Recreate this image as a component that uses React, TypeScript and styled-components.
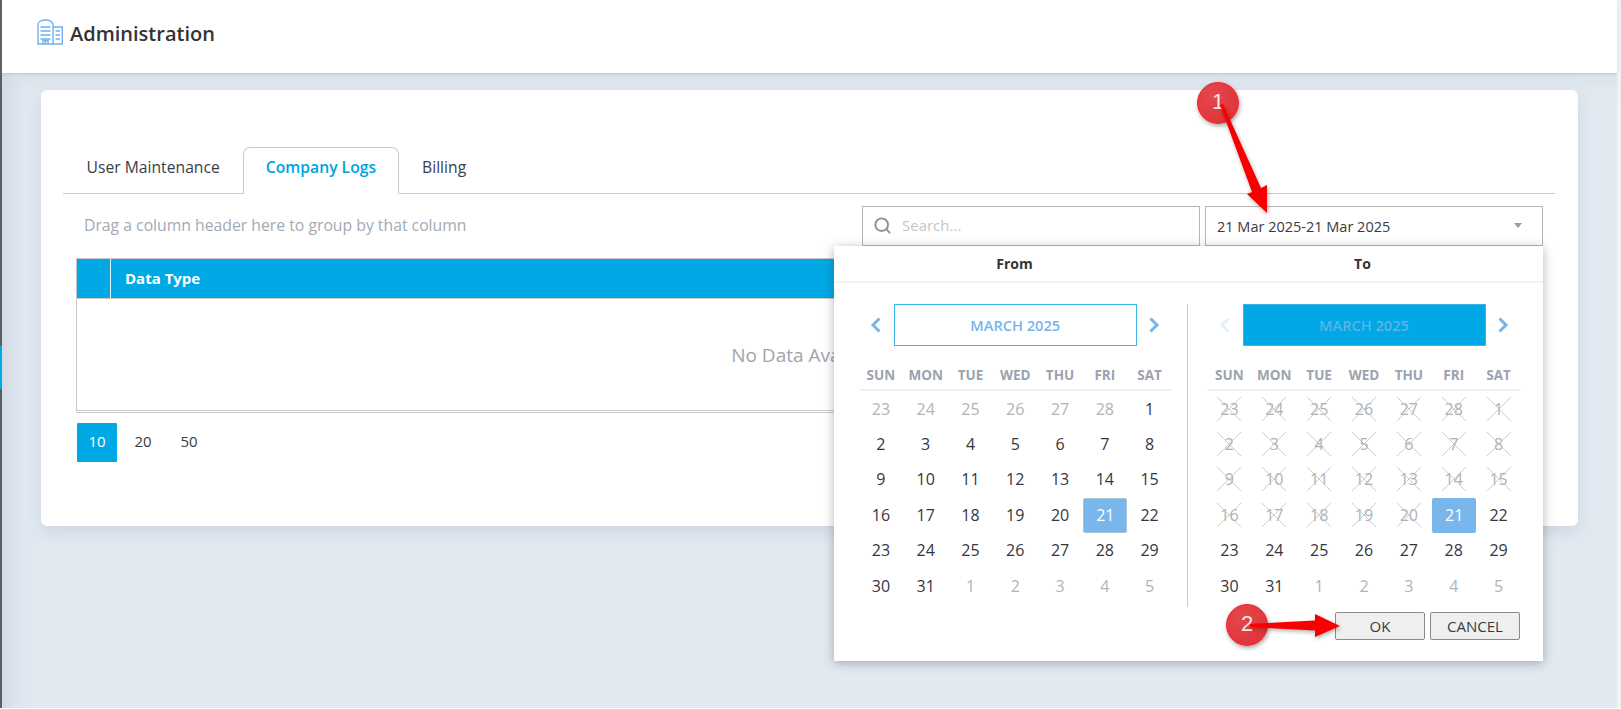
import styled, { createGlobalStyle } from "styled-components";
import { Search } from "lucide-react";

const GlobalStyle = createGlobalStyle`
    html, body {
        margin: 0;
        padding: 0;
        background: #fff;
        overflow: hidden;
    }
    body {
        font-family: "Open Sans", "Noto Sans", sans-serif;
        color: #333;
    }
`;

type Day = { label: number; muted?: boolean; crossed?: boolean; selected?: boolean };

const range = (from: number, to: number) =>
    Array.from({ length: to - from + 1 }, (_, i) => from + i);

const WEEK = ["SUN", "MON", "TUE", "WED", "THU", "FRI", "SAT"];

const buildDays = (crossBefore: boolean): Day[] => [
    ...range(23, 28).map((label) => ({ label, muted: !crossBefore, crossed: crossBefore })),
    ...range(1, 31).map((label) => ({
        label,
        crossed: crossBefore && label < 21,
        selected: label === 21,
    })),
    ...range(1, 5).map((label) => ({ label, muted: true })),
];

function BuildingIcon() {
    return (
        <svg width="26" height="26" viewBox="0 0 26 26" fill="none" stroke="#6fb1ee" strokeWidth="1.4">
            <path d="M1 25V5.500C1 3 4 1 8.500 1S16 3 16 5.500V25Z" />
            <path d="M16 8H25.300V25H16" />
            <path d="M3.500 8H13.500M3.500 12H13.500M3.500 16H13.500M3.500 20H13.500" />
            <path d="M18.500 12H23M18.500 16H23M18.500 20H23" />
            <path d="M6 25V21.500H11V25M8.500 21.500V25" />
        </svg>
    );
}

function Chevron({ dir, faded }: { dir: "left" | "right"; faded?: boolean }) {
    return (
        <svg width="12" height="16" viewBox="0 0 12 16" fill="none">
            <path
                d={dir === "left" ? "M9.500 1.500L3 8L9.500 14.500" : "M2.500 1.500L9 8L2.500 14.500"}
                stroke={faded ? "#e6f0fa" : "#78b4ea"}
                strokeWidth="3"
            />
        </svg>
    );
}

function Calendar({ side }: { side: "from" | "to" }) {
    const isTo = side === "to";
    return (
        <CalendarPanel $side={side}>
            <MonthNav>
                <ArrowSlot>
                    <Chevron dir="left" faded={isTo} />
                </ArrowSlot>
                <MonthBox $filled={isTo}>MARCH 2025</MonthBox>
                <ArrowSlot>
                    <Chevron dir="right" />
                </ArrowSlot>
            </MonthNav>
            <WeekRow>
                {WEEK.map((day) => (
                    <span key={day}>{day}</span>
                ))}
            </WeekRow>
            <DayGrid>
                {buildDays(isTo).map((day, i) => (
                    <DayCell
                        key={i}
                        $muted={day.muted}
                        $crossed={day.crossed}
                        $selected={day.selected}
                        $outlined={day.selected && !isTo}
                    >
                        {day.label}
                    </DayCell>
                ))}
            </DayGrid>
        </CalendarPanel>
    );
}

function App() {
    return (
        <Page>
            <GlobalStyle />
            <LeftRail>
                <RailMark />
            </LeftRail>
            <Main>
                <Header>
                    <BuildingIcon />
                    <Title>Administration</Title>
                </Header>
                <Content>
                    <Card>
                        <Tabs>
                            <Tab>User Maintenance</Tab>
                            <Tab $active>Company Logs</Tab>
                            <Tab>Billing</Tab>
                        </Tabs>
                        <Toolbar>
                            <GroupHint>Drag a column header here to group by that column</GroupHint>
                            <SearchBox>
                                <Search size={19} color="#8a9097" strokeWidth={2.4} />
                                <SearchInput placeholder="Search..." readOnly />
                            </SearchBox>
                            <DateSelect>
                                21 Mar 2025-21 Mar 2025
                                <Caret />
                            </DateSelect>
                        </Toolbar>
                        <Table>
                            <TableHead>
                                <ExpandCol />
                                <HeadCol>Data Type</HeadCol>
                            </TableHead>
                            <TableBody>No Data Available</TableBody>
                        </Table>
                        <Pager>
                            <PageSize $active>10</PageSize>
                            <PageSize>20</PageSize>
                            <PageSize>50</PageSize>
                        </Pager>
                        <Popup>
                            <PopupHead>
                                <PopupHeadCell $side="from">From</PopupHeadCell>
                                <PopupHeadCell $side="to">To</PopupHeadCell>
                            </PopupHead>
                            <Calendars>
                                <Calendar side="from" />
                                <Calendar side="to" />
                            </Calendars>
                            <PopupFooter>
                                <FooterButton>OK</FooterButton>
                                <FooterButton>CANCEL</FooterButton>
                            </PopupFooter>
                        </Popup>
                    </Card>
                </Content>
            </Main>
            <RightEdge />
            <StepBadge $x={1218} $y={103}>1</StepBadge>
            <StepBadge $x={1247} $y={625}>2</StepBadge>
            <Annotations width="1621" height="709" viewBox="0 0 1621 709">
                <path d="M1220 105L1223 104L1261 188L1267 185L1267 213L1247 194L1252 192Z" fill="#f80000" />
                <path d="M1250 624L1315 620.500L1315 614L1340 626L1315 637L1315 630.500L1250 627Z" fill="#f80000" />
            </Annotations>
        </Page>
    );
}

const Page = styled.div`
    position: relative;
    display: flex;
    width: 1621px;
    height: 708px;
    overflow: hidden;
`;

const LeftRail = styled.div`
    width: 2px;
    flex: none;
    background: #5e5e5e;
    padding-top: 346px;
`;

const RailMark = styled.div`
    height: 43px;
    background: #00a8e6;
`;

const RightEdge = styled.div`
    width: 4px;
    flex: none;
    background: #f1f1f1;
`;

const Main = styled.div`
    flex: 1;
    min-width: 0;
    display: flex;
    flex-direction: column;
    background: #e2e9f1;
`;

const Header = styled.header`
    height: 73px;
    flex: none;
    display: flex;
    align-items: center;
    gap: 7px;
    padding: 0 0 9px 35px;
    box-sizing: border-box;
    background: #fff;
    position: relative;
    box-shadow: 0 1px 2px rgba(120, 135, 150, 0.3);
`;

const Title = styled.h1`
    margin: 0;
    padding-top: 2px;
    font-size: 20px;
    font-weight: 600;
    color: #333;
`;

const Content = styled.main`
    flex: 1;
    padding: 17px 39px 0;
    box-shadow: inset 22px 14px 22px -14px rgba(170, 185, 200, 0.35);
`;

const Card = styled.section`
    position: relative;
    background: #fff;
    border-radius: 6px;
    padding: 57px 0 64px;
    box-shadow: 0 6px 16px rgba(170, 185, 200, 0.4);
`;

const Tabs = styled.nav`
    display: flex;
    height: 46px;
    margin: 0 23px 0 22px;
    padding-left: 0.5px;
    border-bottom: 1px solid #c9c9c9;
`;

const Tab = styled.div<{ $active?: boolean }>`
    padding: 0 22px 8px;
    height: 47px;
    box-sizing: border-box;
    display: flex;
    align-items: center;
    font-size: 15.7px;
    font-weight: ${(p) => (p.$active ? 600 : 400)};
    color: ${(p) => (p.$active ? "#00a3e3" : "#3c3c46")};
    border: 1px solid ${(p) => (p.$active ? "#c9c9c9" : "transparent")};
    border-bottom: 1px solid ${(p) => (p.$active ? "#fff" : "transparent")};
    border-radius: 7px 7px 0 0;
    background: ${(p) => (p.$active ? "#fff" : "transparent")};
`;

const Toolbar = styled.div`
    display: flex;
    align-items: center;
    gap: 5px;
    margin: 12px 35px 12px;
    padding-left: 8px;
`;

const GroupHint = styled.div`
    flex: 1;
    padding-bottom: 2px;
    font-size: 15.75px;
    color: #a3a9b5;
`;

const SearchBox = styled.div`
    width: 338px;
    height: 40px;
    flex: none;
    box-sizing: border-box;
    display: flex;
    align-items: center;
    gap: 10px;
    padding: 0 0 2px 10px;
    border: 1px solid #b6b6b6;
`;

const SearchInput = styled.input`
    flex: 1;
    min-width: 0;
    border: 0;
    outline: 0;
    padding: 0;
    font-family: inherit;
    font-size: 15px;
    background: transparent;

    &::placeholder {
        color: #c6c6c6;
        opacity: 1;
    }
`;

const DateSelect = styled.div`
    width: 338px;
    height: 40px;
    flex: none;
    box-sizing: border-box;
    display: flex;
    align-items: center;
    justify-content: space-between;
    padding: 0 20px 0 11px;
    font-size: 14.5px;
    color: #3a3a42;
    border: 1px solid #b6b6b6;
`;

const Caret = styled.span`
    width: 0;
    height: 0;
    margin-top: -1px;
    border-left: 4px solid transparent;
    border-right: 4px solid transparent;
    border-top: 5px solid #9a9ea5;
`;

const Table = styled.div`
    margin: 0 35px;
    border: 1px solid #c9c9c9;
`;

const TableHead = styled.div`
    display: flex;
    height: 39px;
    background: #00a8e6;
    color: #fff;
    font-size: 15px;
    font-weight: 700;
`;

const ExpandCol = styled.div`
    width: 33px;
    flex: none;
    border-right: 1px solid #e4f4fb;
`;

const HeadCol = styled.div`
    flex: 1;
    display: flex;
    align-items: center;
    padding: 0 0 2px 14px;
`;

const TableBody = styled.div`
    height: 112px;
    display: flex;
    align-items: center;
    justify-content: center;
    border-top: 1px solid #c9c9c9;
    font-size: 19px;
    color: #a0a4aa;
    box-sizing: border-box;
`;

const Pager = styled.div`
    display: flex;
    gap: 6px;
    margin: 1px 35px 0;
    padding: 10px 0 0 1px;
    border-top: 1px solid #c9c9c9;
`;

const PageSize = styled.div<{ $active?: boolean }>`
    width: 40px;
    height: 39px;
    box-sizing: border-box;
    padding-bottom: 3px;
    display: flex;
    align-items: center;
    justify-content: center;
    font-size: 15px;
    border-radius: 1px;
    color: ${(p) => (p.$active ? "#fff" : "#3a3a42")};
    background: ${(p) => (p.$active ? "#00a8e6" : "transparent")};
`;

const Popup = styled.div`
    position: absolute;
    top: 156px;
    left: 793px;
    width: 709px;
    height: 415px;
    display: flex;
    flex-direction: column;
    background: #fff;
    box-shadow: 0 2px 10px rgba(60, 70, 80, 0.4);
`;

const PopupHead = styled.div`
    display: flex;
    height: 35px;
    flex: none;
    align-items: center;
    border-bottom: 2px solid #f1f2f3;
    font-size: 14px;
    font-weight: 700;
    color: #333;
`;

const PopupHeadCell = styled.div<{ $side: "from" | "to" }>`
    width: ${(p) => (p.$side === "from" ? "354px" : "355px")};
    box-sizing: border-box;
    text-align: center;
    padding: ${(p) => (p.$side === "from" ? "0 0 0 7px" : "0 6px 0 0")};
`;

const Calendars = styled.div`
    display: flex;
    padding-top: 21px;
`;

const CalendarPanel = styled.div<{ $side: "from" | "to" }>`
    box-sizing: border-box;
    width: ${(p) => (p.$side === "from" ? "354px" : "355px")};
    padding: ${(p) => (p.$side === "from" ? "0 15px 0 24.5px" : "0 22px 0 19px")};
    border-right: ${(p) => (p.$side === "from" ? "1px solid #c9c9c9" : "0")};
    height: 303px;
`;

const MonthNav = styled.div`
    display: flex;
    align-items: center;
    height: 42px;
`;

const ArrowSlot = styled.div`
    width: 35.5px;
    flex: none;
    display: flex;
    justify-content: center;
`;

const MonthBox = styled.div<{ $filled?: boolean }>`
    flex: 1;
    height: 42px;
    box-sizing: border-box;
    display: flex;
    align-items: center;
    justify-content: center;
    font-size: 14.6px;
    font-weight: 600;
    color: ${(p) => (p.$filled ? "#5cb3e8" : "#78b4ea")};
    background: ${(p) => (p.$filled ? "#00a8e6" : "#fff")};
    border: 1px solid #3bb5e8;
`;

const WeekRow = styled.div`
    display: grid;
    grid-template-columns: repeat(7, 1fr);
    height: 45px;
    box-sizing: border-box;
    align-items: center;
    padding-top: 14px;
    border-bottom: 2px solid #f0f1f2;
    text-align: center;
    font-size: 13.5px;
    font-weight: 700;
    color: #9aa3ae;
`;

const DayGrid = styled.div`
    display: grid;
    grid-template-columns: repeat(7, 1fr);
    grid-auto-rows: 35.4px;
`;

const DayCell = styled.div<{
    $muted?: boolean;
    $crossed?: boolean;
    $selected?: boolean;
    $outlined?: boolean;
}>`
    position: relative;
    display: flex;
    align-items: center;
    justify-content: center;
    margin: ${(p) => (p.$selected ? "1px 0 0 1px" : "0")};
    font-size: 16px;
    border-radius: ${(p) => (p.$selected ? "2px" : "0")};
    color: ${(p) => {
        if (p.$selected) return "#fff";
        if (p.$crossed) return "#aeb2b8";
        return p.$muted ? "#b3b3b3" : "#36363e";
    }};
    background: ${(p) => (p.$selected ? "#78b6ec" : "transparent")};
    border: ${(p) => (p.$outlined ? "1px solid #a9c3d8" : "0")};

    &::after {
        content: ${(p) => (p.$crossed ? '""' : "none")};
        position: absolute;
        left: 50%;
        top: 50%;
        width: 24px;
        height: 24px;
        transform: translate(-50%, -50%);
        background:
            linear-gradient(45deg, transparent 48%, rgba(190, 190, 190, 0.75) 48%, rgba(190, 190, 190, 0.75) 52%, transparent 52%),
            linear-gradient(-45deg, transparent 48%, rgba(190, 190, 190, 0.75) 48%, rgba(190, 190, 190, 0.75) 52%, transparent 52%);
    }
`;

const PopupFooter = styled.div`
    display: flex;
    justify-content: flex-end;
    gap: 5px;
    padding: 5px 23px 0 0;
`;

const FooterButton = styled.button`
    width: 90px;
    height: 28px;
    padding: 0;
    box-sizing: border-box;
    font-family: inherit;
    font-size: 15px;
    color: #3a3a42;
    background: #efefef;
    border: 1px solid #8a8a8a;
    border-radius: 2px;
`;

const Annotations = styled.svg`
    position: absolute;
    top: 0;
    left: 0;
    pointer-events: none;
    filter: drop-shadow(1px 2px 2px rgba(0, 0, 0, 0.3));
`;

const StepBadge = styled.div<{ $x: number; $y: number }>`
    position: absolute;
    left: ${(p) => p.$x - 21}px;
    top: ${(p) => p.$y - 21}px;
    width: 42px;
    height: 42px;
    box-sizing: border-box;
    padding-bottom: 3px;
    display: flex;
    align-items: center;
    justify-content: center;
    border-radius: 50%;
    border: 1px solid #f2222a;
    background: radial-gradient(circle at 35% 30%, #e4474b, #df2f35);
    color: #f6e6e6;
    font-family: "Liberation Sans", Arial, sans-serif;
    font-size: 22px;
    box-shadow: 1px 2px 4px rgba(0, 0, 0, 0.35);
`;

export default App;
